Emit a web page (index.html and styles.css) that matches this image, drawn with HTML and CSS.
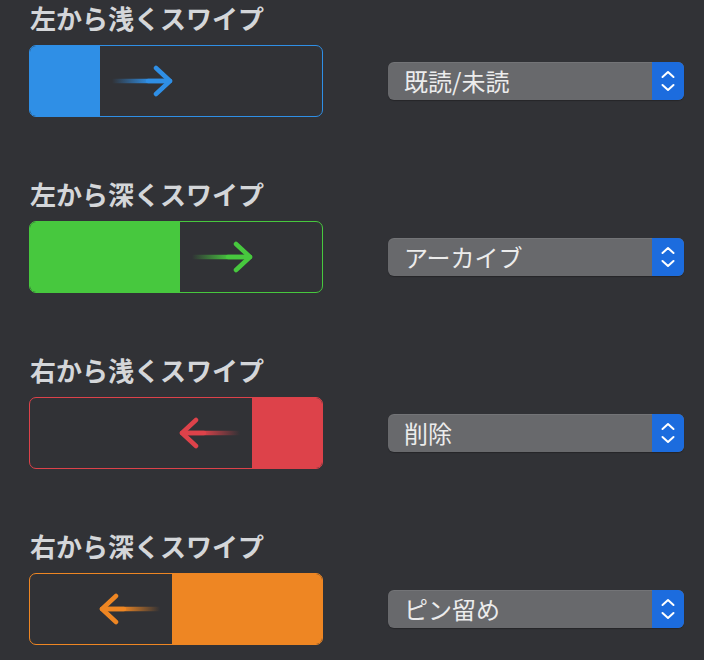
FILE: index.html
```html
<!DOCTYPE html>
<html lang="ja">
<head>
<meta charset="utf-8">
<link rel="stylesheet" href="styles.css">
</head>
<body>
<svg width="0" height="0" class="defs">
  <defs>
    <linearGradient id="gb" gradientUnits="userSpaceOnUse" x1="0" y1="0" x2="38" y2="0">
      <stop offset="0" stop-color="#2f8fe6" stop-opacity="0"/>
      <stop offset="1" stop-color="#2f8fe6" stop-opacity="1"/>
    </linearGradient>
    <linearGradient id="gg" gradientUnits="userSpaceOnUse" x1="0" y1="0" x2="38" y2="0">
      <stop offset="0" stop-color="#47c83e" stop-opacity="0"/>
      <stop offset="1" stop-color="#47c83e" stop-opacity="1"/>
    </linearGradient>
    <linearGradient id="gr" gradientUnits="userSpaceOnUse" x1="0" y1="0" x2="38" y2="0">
      <stop offset="0" stop-color="#dd424a" stop-opacity="0"/>
      <stop offset="1" stop-color="#dd424a" stop-opacity="1"/>
    </linearGradient>
    <linearGradient id="go" gradientUnits="userSpaceOnUse" x1="0" y1="0" x2="38" y2="0">
      <stop offset="0" stop-color="#ee8623" stop-opacity="0"/>
      <stop offset="1" stop-color="#ee8623" stop-opacity="1"/>
    </linearGradient>
  </defs>
</svg>
<main class="list">
  <section class="item">
    <div class="label">左から浅くスワイプ</div>
    <div class="row">
      <div class="swipe blue">
        <div class="fill short"></div>
        <svg class="arrow" width="62" height="32" viewBox="0 0 62 32"><path d="M0 16 H58" stroke="url(#gb)" stroke-width="4.5" fill="none"/><path d="M44 3 L58 16 L44 29" stroke="#2f8fe6" stroke-width="4.5" fill="none" stroke-linecap="round" stroke-linejoin="round"/><path d="M36 16 H58" stroke="#2f8fe6" stroke-width="4.5" stroke-linecap="round"/></svg>
      </div>
      <div class="select"><span class="value">既読/未読</span><span class="stepper"><svg width="14" height="22" viewBox="0 0 14 22"><path d="M1.5 7 L7 2 L12.5 7 M1.5 15 L7 20 L12.5 15" stroke="#fff" stroke-width="2" fill="none" stroke-linecap="round" stroke-linejoin="round"/></svg></span></div>
    </div>
  </section>
  <section class="item">
    <div class="label">左から深くスワイプ</div>
    <div class="row">
      <div class="swipe green">
        <div class="fill long"></div>
        <svg class="arrow" width="62" height="32" viewBox="0 0 62 32"><path d="M0 16 H58" stroke="url(#gg)" stroke-width="4.5" fill="none"/><path d="M44 3 L58 16 L44 29" stroke="#47c83e" stroke-width="4.5" fill="none" stroke-linecap="round" stroke-linejoin="round"/><path d="M36 16 H58" stroke="#47c83e" stroke-width="4.5" stroke-linecap="round"/></svg>
      </div>
      <div class="select"><span class="value">アーカイブ</span><span class="stepper"><svg width="14" height="22" viewBox="0 0 14 22"><path d="M1.5 7 L7 2 L12.5 7 M1.5 15 L7 20 L12.5 15" stroke="#fff" stroke-width="2" fill="none" stroke-linecap="round" stroke-linejoin="round"/></svg></span></div>
    </div>
  </section>
  <section class="item">
    <div class="label">右から浅くスワイプ</div>
    <div class="row">
      <div class="swipe red right">
        <svg class="arrow left" width="62" height="32" viewBox="0 0 62 32"><g transform="translate(62 0) scale(-1 1)"><path d="M0 16 H58" stroke="url(#gr)" stroke-width="4.5" fill="none"/><path d="M44 3 L58 16 L44 29" stroke="#dd424a" stroke-width="4.5" fill="none" stroke-linecap="round" stroke-linejoin="round"/><path d="M36 16 H58" stroke="#dd424a" stroke-width="4.5" stroke-linecap="round"/></g></svg>
        <div class="fill short"></div>
      </div>
      <div class="select"><span class="value">削除</span><span class="stepper"><svg width="14" height="22" viewBox="0 0 14 22"><path d="M1.5 7 L7 2 L12.5 7 M1.5 15 L7 20 L12.5 15" stroke="#fff" stroke-width="2" fill="none" stroke-linecap="round" stroke-linejoin="round"/></svg></span></div>
    </div>
  </section>
  <section class="item">
    <div class="label">右から深くスワイプ</div>
    <div class="row">
      <div class="swipe orange right">
        <svg class="arrow left" width="62" height="32" viewBox="0 0 62 32"><g transform="translate(62 0) scale(-1 1)"><path d="M0 16 H58" stroke="url(#go)" stroke-width="4.5" fill="none"/><path d="M44 3 L58 16 L44 29" stroke="#ee8623" stroke-width="4.5" fill="none" stroke-linecap="round" stroke-linejoin="round"/><path d="M36 16 H58" stroke="#ee8623" stroke-width="4.5" stroke-linecap="round"/></g></svg>
        <div class="fill long"></div>
      </div>
      <div class="select"><span class="value">ピン留め</span><span class="stepper"><svg width="14" height="22" viewBox="0 0 14 22"><path d="M1.5 7 L7 2 L12.5 7 M1.5 15 L7 20 L12.5 15" stroke="#fff" stroke-width="2" fill="none" stroke-linecap="round" stroke-linejoin="round"/></svg></span></div>
    </div>
  </section>
</main>
</body>
</html>
```
FILE: styles.css
```css
html, body {
  margin: 0;
  padding: 0;
  background: #313236;
  width: 704px;
  height: 660px;
  overflow: hidden;
}
.defs {
  display: block;
  width: 0;
  height: 0;
}
.list {
  display: flex;
  flex-direction: column;
  gap: 62px;
  padding: 3px 0 0 29px;
  font-family: "Noto Sans CJK JP", "Noto Sans", sans-serif;
}
.label {
  font-size: 26px;
  line-height: 30px;
  height: 30px;
  font-weight: 700;
  color: #d4d6d9;
  padding-left: 1px;
  margin-bottom: 12px;
}
.row {
  display: flex;
  align-items: center;
  gap: 65px;
}
.swipe {
  box-sizing: border-box;
  width: 294px;
  height: 72px;
  border: 1px solid;
  border-radius: 7px;
  overflow: hidden;
  display: flex;
  align-items: center;
}
.swipe.right {
  justify-content: flex-end;
}
.fill {
  align-self: stretch;
}
.fill.short { width: 70px; }
.fill.long { width: 150px; }
.arrow { margin-left: 12px; flex: none; }
.arrow.left { margin-left: 0; margin-right: 12px; }
.blue { border-color: #2f8fe6; }
.blue .fill { background: #2f8fe6; }
.green { border-color: #47c83e; }
.green .fill { background: #47c83e; }
.red { border-color: #dd424a; }
.red .fill { background: #dd424a; }
.orange { border-color: #ee8623; }
.orange .fill { background: #ee8623; }
.select {
  box-sizing: border-box;
  width: 296px;
  height: 38px;
  border-radius: 6px;
  background: #68696c;
  display: flex;
  overflow: hidden;
  box-shadow: 0 1px 1px rgba(0,0,0,0.25), inset 0 1px 0 rgba(255,255,255,0.08);
}
.value {
  flex: 1;
  padding-left: 16px;
  font-size: 24px;
  line-height: 38px;
  color: #ececec;
}
.stepper {
  width: 32px;
  background: #1c6cde;
  display: flex;
  align-items: center;
  justify-content: center;
}
.stepper svg { display: block; }
```
